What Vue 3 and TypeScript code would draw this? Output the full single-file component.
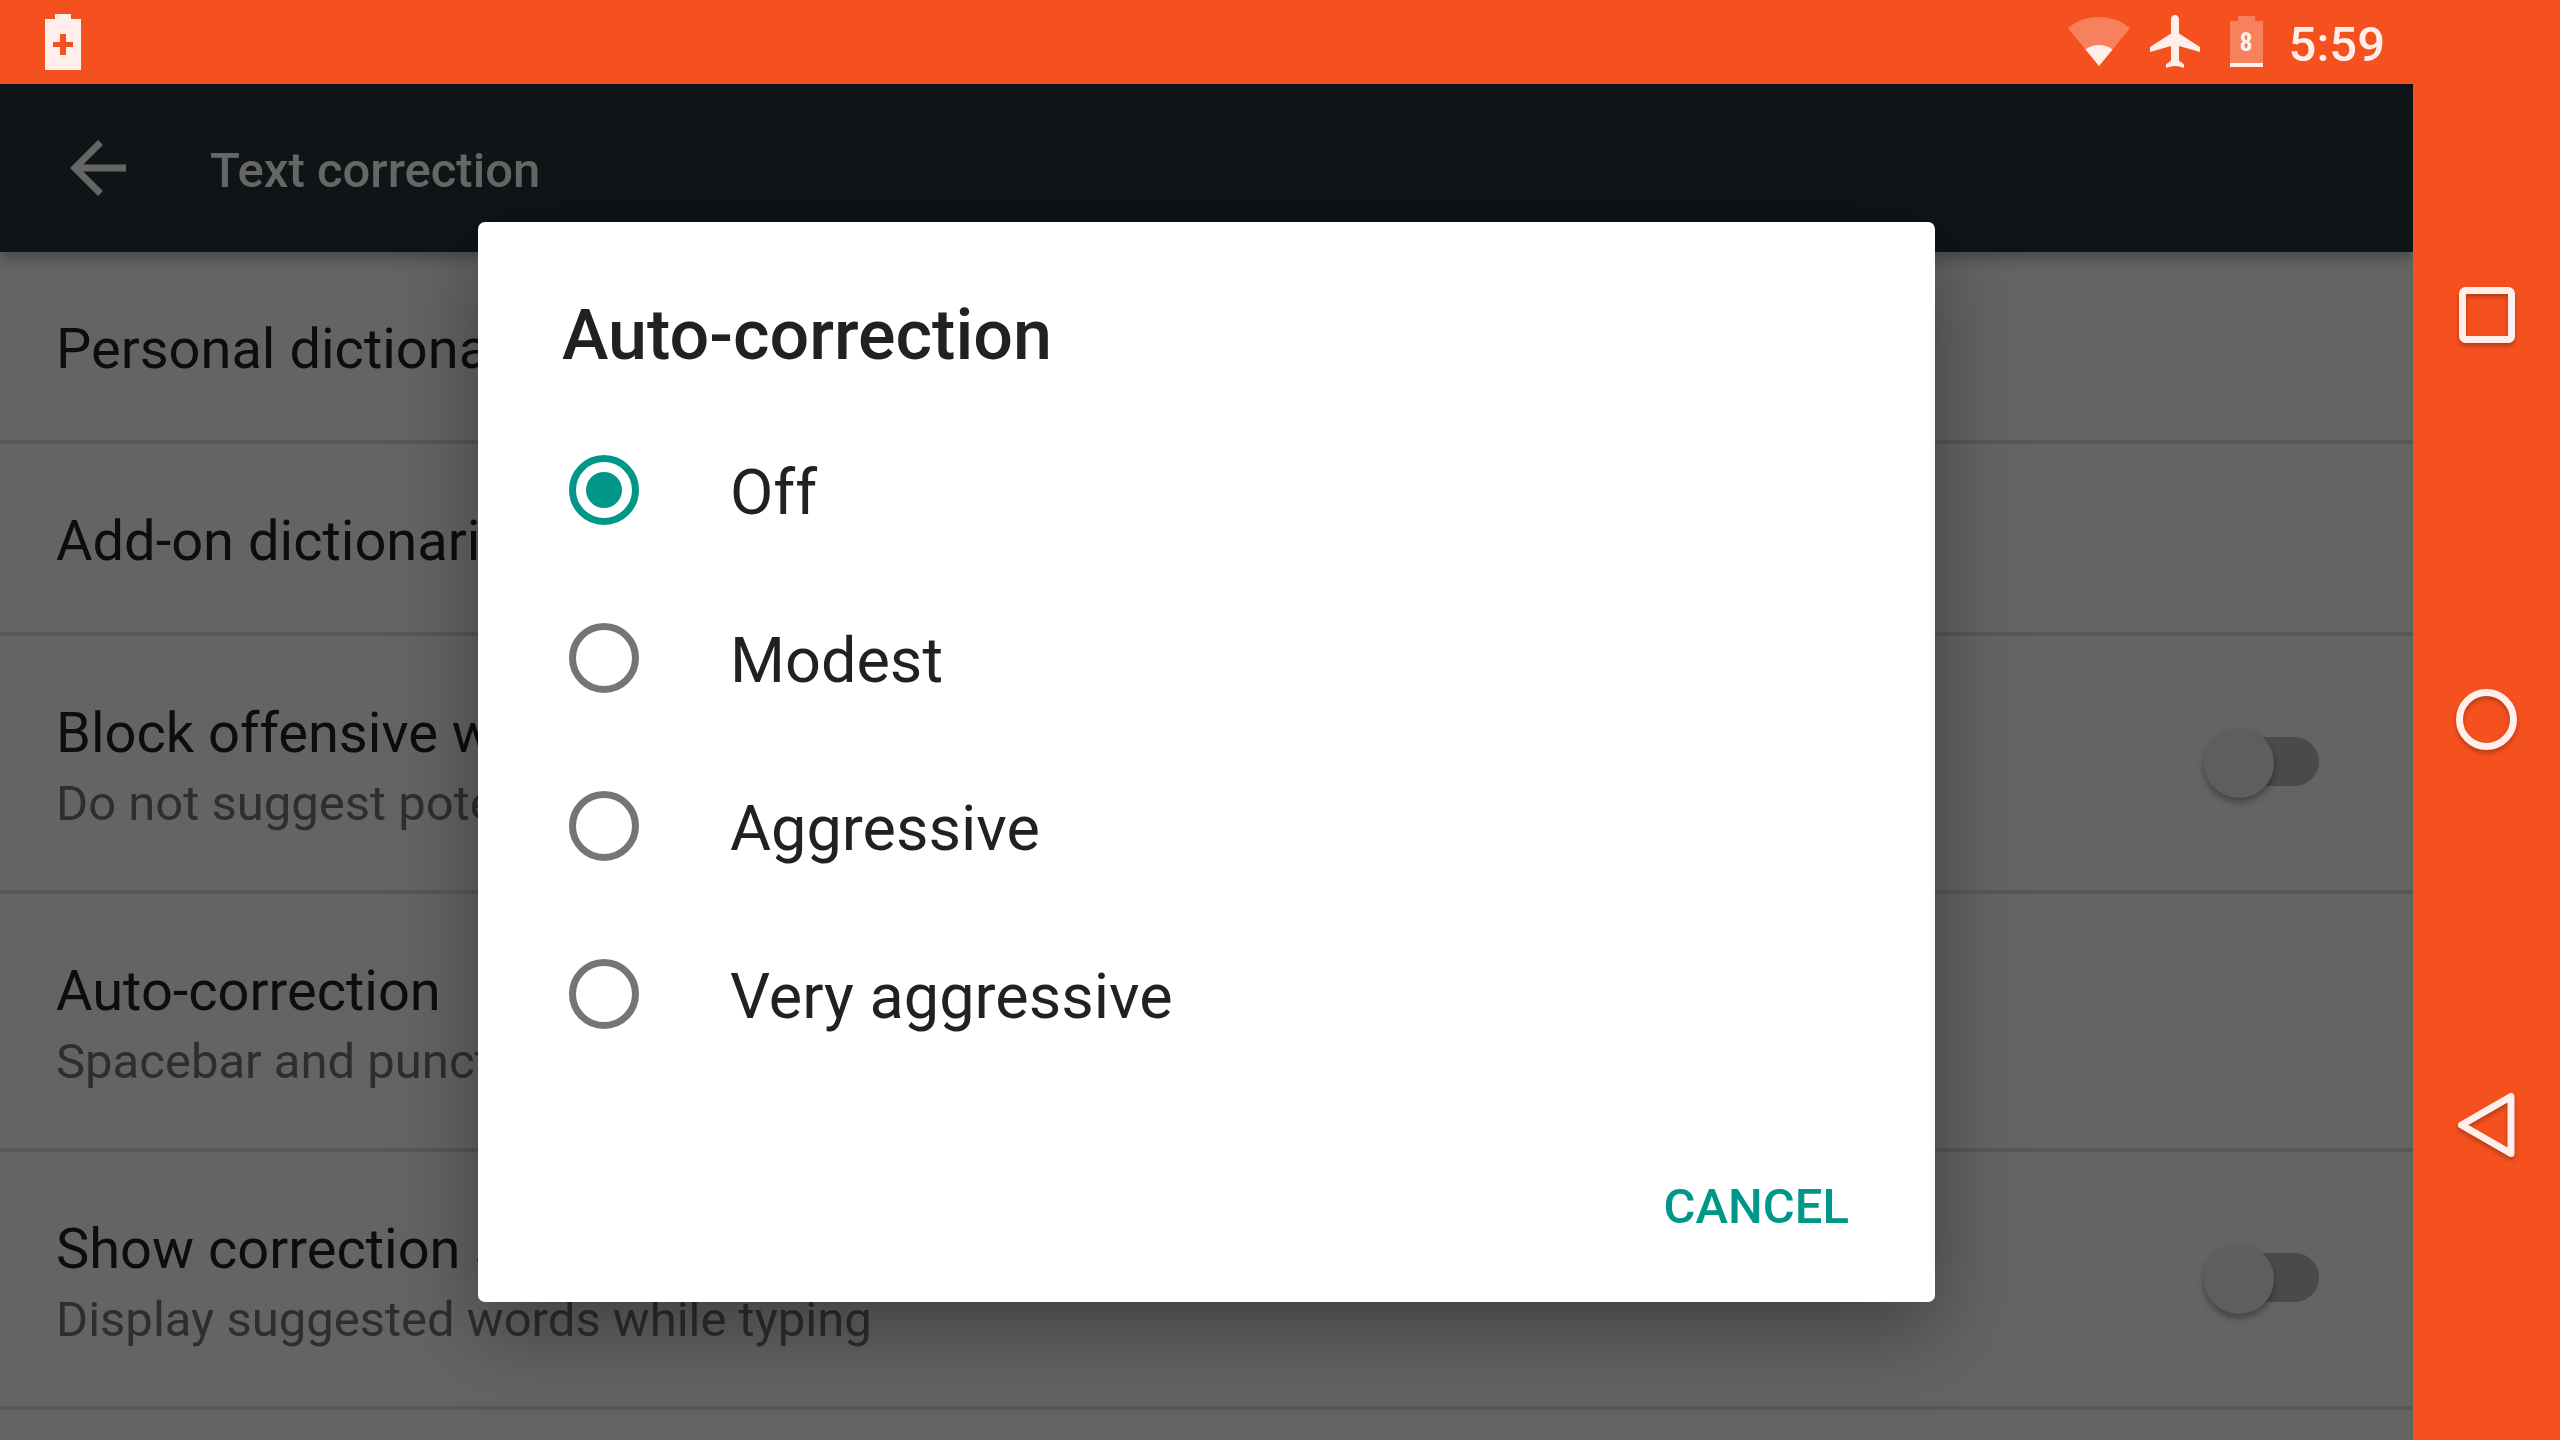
<script setup lang="ts">
import { ref } from 'vue'

interface Preference {
  id: string
  title: string
  summary?: string
  toggle?: boolean
}

const preferences: Preference[] = [
  { id: 'personal', title: 'Personal dictionary' },
  { id: 'addon', title: 'Add-on dictionaries' },
  {
    id: 'block',
    title: 'Block offensive words',
    summary: 'Do not suggest potentially offensive words',
    toggle: true,
  },
  {
    id: 'autocorrect',
    title: 'Auto-correction',
    summary: 'Spacebar and punctuation correct mistyped words',
  },
  {
    id: 'suggestions',
    title: 'Show correction suggestions',
    summary: 'Display suggested words while typing',
    toggle: true,
  },
]

const levels: string[] = ['Off', 'Modest', 'Aggressive', 'Very aggressive']
const selected = ref<string>('Off')
const enabled = ref<string[]>([])
</script>

<template>
  <div class="device">
    <div class="screen">
      <header class="status">
        <svg class="status-icon" width="36" height="56" viewBox="0 0 36 56" aria-hidden="true">
          <path
            fill="#ffeeea"
            fill-rule="evenodd"
            d="M10 0h16v5h10v51H0V5h10zM15 20v8H8v5h7v8h6v-8h7v-5h-7v-8z"
          />
        </svg>
        <div class="status-right">
          <svg width="62" height="56" viewBox="0 0 62 56" aria-hidden="true">
            <path fill="#fff" fill-opacity="0.28" d="M31 52L0 14Q13 3 31 3T62 14z" />
            <path fill="#ffeeea" d="M31 52L17.500 35.500Q23 31 31 31T44.500 35.500z" />
          </svg>
          <svg class="plane" width="50" height="56" viewBox="0 0 50 56" aria-hidden="true">
            <path
              fill="#ffeeea"
              d="M25 1c-2.200 0-4 1.800-4 4v14.500L0 33v5l21-6v14.500c0 1-4 2.500-5 4V54c3-1.300 6-2 9-2s6 .7 9 2v-3.500c-1-1.500-5-3-5-4V32l21 6v-5L29 19.500V5c0-2.200-1.800-4-4-4z"
            />
          </svg>
          <svg class="battery" width="33" height="56" viewBox="0 0 33 56" aria-hidden="true">
            <path fill="#fff" fill-opacity="0.28" d="M8 2h17v5h8v42H0V7h8z" />
            <path fill="#ffeeea" d="M0 49h33v4H0z" />
            <text class="level" x="16" y="37" text-anchor="middle">8</text>
          </svg>
          <time class="clock">5:59</time>
        </div>
      </header>

      <div class="app">
        <div class="toolbar">
          <button class="back" type="button" aria-label="Navigate up">
            <svg width="84" height="84" viewBox="0 0 24 24" aria-hidden="true">
              <path fill="#fff" d="M20 11H7.800l5.600-5.600L12 4l-8 8 8 8 1.400-1.400L7.800 13H20z" />
            </svg>
          </button>
          <h1>Text correction</h1>
        </div>
        <ul class="prefs">
          <li v-for="p in preferences" :key="p.id">
            <label class="pref" :class="{ tall: p.summary }">
              <span class="pref-text">
                <span class="pref-title">{{ p.title }}</span>
                <span v-if="p.summary" class="pref-summary">{{ p.summary }}</span>
              </span>
              <input
                v-if="p.toggle"
                v-model="enabled"
                class="switch"
                type="checkbox"
                role="switch"
                :value="p.id"
              />
            </label>
          </li>
        </ul>

        <div class="scrim">
          <section class="dialog" role="dialog" aria-labelledby="dialog-title">
            <h2 id="dialog-title">Auto-correction</h2>
            <div class="options" role="radiogroup" aria-labelledby="dialog-title">
              <label v-for="level in levels" :key="level" class="option">
                <input v-model="selected" type="radio" name="level" :value="level" />
                <span>{{ level }}</span>
              </label>
            </div>
            <div class="actions">
              <button class="cancel" type="button">CANCEL</button>
            </div>
          </section>
        </div>
      </div>
    </div>

    <nav class="navbar">
      <button type="button" aria-label="Overview">
        <svg width="84" height="84" viewBox="0 0 84 84" aria-hidden="true">
          <rect x="17.500" y="17.500" width="49" height="49" rx="3" />
        </svg>
      </button>
      <button type="button" aria-label="Home">
        <svg width="84" height="84" viewBox="0 0 84 84" aria-hidden="true">
          <circle cx="41.500" cy="41.500" r="27" />
        </svg>
      </button>
      <button type="button" aria-label="Back">
        <svg width="84" height="84" viewBox="0 0 84 84" aria-hidden="true">
          <path d="M66 13.500v57L16.500 42z" />
        </svg>
      </button>
    </nav>
  </div>
</template>

<style>
body {
  background: #f4511e;
}
</style>

<style scoped>
.device {
  display: flex;
  height: 100vh;
  overflow: hidden;
  background: #f4511e;
  font-family: Roboto, "Noto Sans", sans-serif;
}

h1,
h2 {
  margin: 0;
  font-weight: 500;
}

button {
  display: flex;
  align-items: center;
  justify-content: center;
  padding: 0;
  border: 0;
  background: none;
  font-family: inherit;
}

svg {
  display: block;
}

.screen {
  display: flex;
  flex: 1;
  flex-direction: column;
  min-width: 0;
}

.status {
  display: flex;
  flex: none;
  align-items: center;
  justify-content: space-between;
  height: 84px;
  padding: 0 28px 0 45px;
}

.status-right {
  display: flex;
  align-items: center;
}

.plane {
  margin-left: 20px;
}

.battery {
  margin: 0 26px 0 30px;
}

.level {
  fill: #ffeeea;
  font-family: "Roboto Condensed", Roboto, sans-serif;
  font-size: 26px;
  font-weight: 700;
}

.clock {
  padding-top: 6px;
  color: #ffeeea;
  font-size: 49px;
  font-weight: 500;
  line-height: 58px;
}

.app {
  position: relative;
  flex: 1;
  min-height: 0;
  overflow: hidden;
  background: #fafafa;
}

.toolbar {
  position: relative;
  display: flex;
  align-items: center;
  gap: 70px;
  height: 168px;
  padding-left: 56px;
  background: #263238;
  box-shadow: 0 6px 14px rgba(0, 0, 0, 0.3);
}

.toolbar h1 {
  padding-top: 6px;
  color: #fff;
  font-size: 49px;
  line-height: 58px;
}

.prefs {
  margin: 0;
  padding: 0;
  list-style: none;
}

.pref {
  display: flex;
  align-items: center;
  justify-content: space-between;
  box-sizing: border-box;
  height: 192px;
  padding: 0 94px 0 56px;
  border-bottom: 4px solid #dcdcdc;
}

.pref.tall {
  height: 258px;
}

.pref-text {
  display: flex;
  flex-direction: column;
  padding-top: 6px;
}

.pref-title {
  color: #212121;
  font-size: 56px;
  line-height: 76px;
}

.pref-summary {
  color: #737373;
  font-size: 49px;
  line-height: 66px;
}

.switch {
  position: relative;
  width: 115px;
  height: 70px;
  margin: 0;
  appearance: none;
}

.switch::before {
  content: "";
  position: absolute;
  inset: 9px 0 12px 12px;
  border-radius: 25px;
  background: #b9b9b9;
}

.switch::after {
  content: "";
  position: absolute;
  top: 0;
  left: 0;
  width: 70px;
  height: 70px;
  border-radius: 50%;
  background: #ececec;
  box-shadow: 0 4px 7px rgba(0, 0, 0, 0.35);
}

.switch:checked::after {
  left: 46px;
}

.scrim {
  position: absolute;
  inset: 0;
  display: flex;
  align-items: center;
  justify-content: center;
  background: rgba(0, 0, 0, 0.6);
}

.dialog {
  box-sizing: border-box;
  width: 1457px;
  max-width: 90%;
  padding: 71px 86px 33px 84px;
  border-radius: 7px;
  background: #fff;
  box-shadow: 0 28px 84px rgba(0, 0, 0, 0.36);
}

.dialog h2 {
  margin-bottom: 29px;
  color: #212121;
  font-size: 70px;
  line-height: 84px;
}

.option {
  display: flex;
  align-items: center;
  gap: 91px;
  height: 168px;
  padding-left: 7px;
  color: #212121;
  font-size: 63px;
}

.option span {
  padding-top: 6px;
  line-height: 74px;
}

.option input {
  display: grid;
  place-items: center;
  box-sizing: border-box;
  width: 70px;
  height: 70px;
  margin: 0;
  border: 7px solid #757575;
  border-radius: 50%;
  appearance: none;
}

.option input:checked {
  border-color: #009688;
}

.option input:checked::before {
  content: "";
  width: 36px;
  height: 36px;
  border-radius: 50%;
  background: #009688;
}

.actions {
  display: flex;
  justify-content: flex-end;
  margin-top: 65px;
}

.cancel {
  height: 126px;
  color: #009688;
  font-size: 49px;
  font-weight: 500;
}

.navbar {
  display: flex;
  flex: none;
  flex-direction: column;
  box-sizing: border-box;
  width: 147px;
  padding: 112px 0;
}

.navbar button {
  flex: 1;
}

.navbar svg {
  fill: none;
  stroke: #ffeeea;
  stroke-width: 7px;
  stroke-linejoin: round;
  filter: drop-shadow(0 3px 2px rgba(0, 0, 0, 0.25));
}
</style>
